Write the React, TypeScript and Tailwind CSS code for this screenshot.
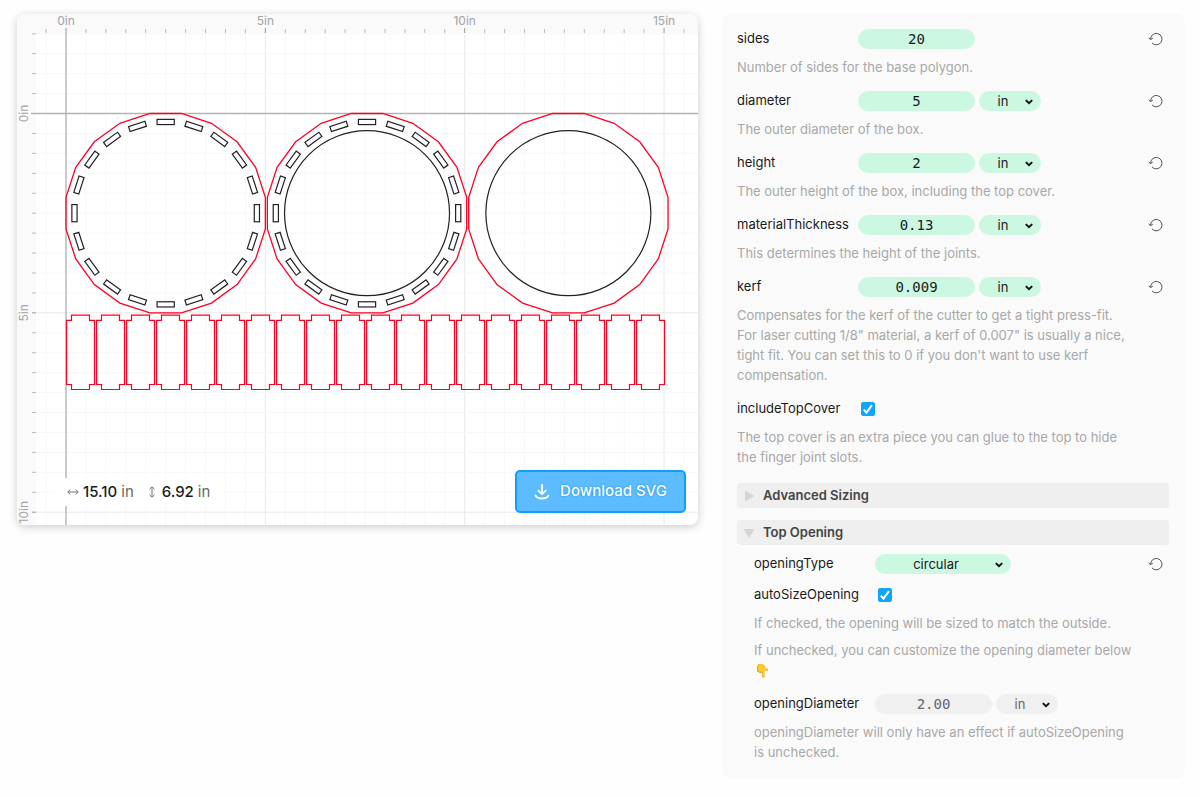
import { useState } from "react";

const PX = 39.87; // pixels per inch
const OX = 49;
const OY = 99.5;
const W = 681;
const H = 511;

const inX = (v: number) => OX + v * PX;
const inY = (v: number) => OY + v * PX;

function Polygon({ cx }: { cx: number }) {
  const r = 2.5 / Math.cos(Math.PI / 20);
  const points = Array.from({ length: 20 }, (_, i) => {
    const a = ((i * 18 + 9) * Math.PI) / 180;
    return `${inX(cx + r * Math.cos(a)).toFixed(2)},${inY(2.5 + r * Math.sin(a)).toFixed(2)}`;
  }).join(" ");
  return <polygon points={points} fill="none" stroke="#ff0022" strokeWidth="1.3" />;
}

function Slots({ cx }: { cx: number }) {
  return (
    <g fill="none" stroke="#222" strokeWidth="1.2">
      {Array.from({ length: 20 }, (_, i) => (
        <rect key={i} x={-8.6} y={-93.8} width={17.2} height={5.2}
          transform={`translate(${inX(cx)} ${inY(2.5)}) rotate(${i * 18})`} />
      ))}
    </g>
  );
}

function Opening({ cx }: { cx: number }) {
  return <circle cx={inX(cx)} cy={inY(2.5)} r={82.5} fill="none" stroke="#222" strokeWidth="1.2" />;
}

function Sides() {
  return (
    <g fill="none" stroke="#ff0022" strokeWidth="1.2">
      {Array.from({ length: 20 }, (_, i) => (
        <path key={i} transform={`translate(${OX + 0.5 + i * 30} 301.2)`}
          d="M5 0H23V5.2H28V69.3H23V74.3H5V69.3H0V5.2H5Z" />
      ))}
    </g>
  );
}

function Drawing() {
  const xs = Array.from({ length: 33 }, (_, i) => i - 1);
  const ys = Array.from({ length: 25 }, (_, i) => i - 4);
  return (
    <svg viewBox={`0 0 ${W} ${H}`} className="block w-full h-auto" role="img" aria-label="Box preview">
      <rect width={W} height="20" fill="#fafafa" />
      <rect width="19" height={H} fill="#fafafa" />

      {/* grid */}
      {xs.map((n) => (
        <g key={n}>
          {n !== 0 && <path d={`M${inX(n / 2)} 20V${H}`} stroke={n % 10 === 0 ? "#e9e9e9" : "#f8f8f8"} />}
          {n !== 0 && <path d={`M${inX(n / 2)} ${n % 10 === 0 ? 14 : 15}V19`} stroke={n % 10 === 0 ? "#999" : "#bbb"} />}
        </g>
      ))}
      {ys.map((n) => (
        <g key={n}>
          {n !== 0 && <path d={`M19 ${inY(n / 2)}H${W}`} stroke={n % 10 === 0 ? "#e9e9e9" : "#f8f8f8"} />}
          {n !== 0 && <path d={`M15 ${inY(n / 2)}H19`} stroke={n % 10 === 0 ? "#999" : "#bbb"} />}
        </g>
      ))}
      <path d={`M${inX(0)} 14V${H}M14 ${inY(0)}H${W}`} stroke="#b4b4b4" strokeWidth="1.4" />

      {/* ruler labels */}
      <g fill="#a3a3a3" fontSize="12" textAnchor="middle">
        {[0, 5, 10, 15].map((n) => (
          <text key={n} x={inX(n)} y="11">{n}in</text>
        ))}
        {[0, 5, 10].map((n) => (
          <text key={n} transform={`translate(11 ${inY(n)}) rotate(-90)`}>{n}in</text>
        ))}
      </g>

      <Polygon cx={2.5} />
      <Slots cx={2.5} />
      <Polygon cx={7.55} />
      <Slots cx={7.55} />
      <Opening cx={7.55} />
      <Polygon cx={12.6} />
      <Opening cx={12.6} />
      <Sides />
    </svg>
  );
}

function ResetButton() {
  return (
    <button type="button" aria-label="Reset" className="ml-auto mr-1.5 text-[#555] cursor-pointer">
      <svg width="15" height="14" viewBox="0 0 15 14" fill="none" stroke="currentColor" strokeWidth="1">
        <path d="M2.6 7.6A5.7 5.7 0 1 1 4 10.9" />
        <path d="M0.6 5.9L2.6 7.6L4.8 6.2" />
      </svg>
    </button>
  );
}

function Chevron() {
  return (
    <svg width="8" height="6" viewBox="0 0 8 6" fill="none" stroke="#111" strokeWidth="2"
      className="absolute right-2 top-2 pointer-events-none">
      <path d="M0.8 1.1L4 4.2L7.2 1.1" />
    </svg>
  );
}

function Label({ name }: { name: string }) {
  return <label htmlFor={name} className="w-[121px] shrink-0 text-[#1a1a1a]">{name}</label>;
}

function Unit({ name, disabled }: { name: string; disabled?: boolean }) {
  return (
    <div className="relative ml-1">
      <select aria-label={`${name} unit`} disabled={disabled} defaultValue="in"
        className={`block appearance-none w-[62px] h-5 pr-3.5 rounded-full text-center leading-5 ${disabled ? "bg-[#f0f0f0] text-[#666] opacity-100" : "bg-[#ccf8e2] text-[#1a1a1a]"}`}>
        <option>in</option>
        <option>mm</option>
        <option>cm</option>
      </select>
      <Chevron />
    </div>
  );
}

function NumberRow({ name, value, unit = true, disabled }: { name: string; value: string; unit?: boolean; disabled?: boolean }) {
  const [current, setCurrent] = useState(value);
  return (
    <div className="flex items-center h-5">
      <Label name={name} />
      <input id={name} type="text" inputMode="decimal" value={current} disabled={disabled}
        onChange={(e) => setCurrent(e.target.value)}
        className={`w-[117px] h-5 rounded-full text-center text-sm font-['DejaVu_Sans_Mono',monospace] ${disabled ? "bg-[#f0f0f0] text-[#666]" : "bg-[#ccf8e2] text-[#1a1a1a]"}`} />
      {unit && <Unit name={name} disabled={disabled} />}
      {!disabled && <ResetButton />}
    </div>
  );
}

function CheckRow({ name }: { name: string }) {
  return (
    <div className="flex items-center h-5">
      <Label name={name} />
      <span className="relative ml-[3px]">
        <input id={name} type="checkbox" defaultChecked
          className="peer block appearance-none size-3.5 rounded-xs border border-[#999] checked:border-[#10a5fb] checked:bg-[#10a5fb]" />
        <svg viewBox="0 0 14 14" fill="none" stroke="#fff" strokeWidth="2"
          className="absolute inset-0 size-3.5 pointer-events-none invisible peer-checked:visible">
          <path d="M2.8 7.6L5.5 10.6L11 3" />
        </svg>
      </span>
    </div>
  );
}

function Description({ children }: { children: React.ReactNode }) {
  return <p className="mt-2 mb-3.5 pr-[33px] leading-5 text-[#a8a8a8]">{children}</p>;
}

function App() {
  return (
    <main className="flex items-start gap-6 pt-3.5 pl-[17px] pr-[15px] pb-4 min-h-screen bg-[#fefefe] font-[Inter,sans-serif] text-[13px]">

      {/* PREVIEW */}
      <section className="relative flex-1 min-w-0 overflow-hidden rounded-lg bg-white shadow-[0_2px_9px_rgba(0,0,0,0.2)]">
        <Drawing />

        <div className="absolute left-9 bottom-[19px] flex items-center h-7 pl-3.5 pr-3 bg-white text-[15px] text-[#666]">
          <svg width="12" height="8" viewBox="0 0 12 8" fill="none" stroke="#777">
            <path d="M0.8 4H11.2M3.2 1.5L0.8 4L3.2 6.5M8.8 1.5L11.2 4L8.8 6.5" />
          </svg>
          <span className="ml-1 mr-1 font-medium text-[#1a1a1a]">15.10</span> in
          <svg width="8" height="12" viewBox="0 0 8 12" fill="none" stroke="#777" className="ml-3.5">
            <path d="M4 0.8V11.2M1.5 3.2L4 0.8L6.5 3.2M1.5 8.8L4 11.2L6.5 8.8" />
          </svg>
          <span className="ml-1.5 mr-1 font-medium text-[#1a1a1a]">6.92</span> in
        </div>

        <button type="button"
          className="absolute right-3 bottom-3 flex items-center justify-center gap-2.5 w-[171px] h-[43px] rounded-[5px] border-2 border-[#0f9ff5] bg-[#5cbcff] text-[15px] font-medium text-white text-shadow-[0_0_2px_#0b8ee0] cursor-pointer">
          <svg width="16" height="16" viewBox="0 0 16 16" fill="none" stroke="#fff" strokeWidth="1.8" strokeLinecap="round" strokeLinejoin="round">
            <path d="M8 1V10M4.3 6.6L8 10.2L11.7 6.6" />
            <path d="M1.5 11.5C3.5 15.5 12.5 15.5 14.5 11.5" />
          </svg>
          Download SVG
        </button>
      </section>

      {/* SETTINGS */}
      <form className="w-[463px] shrink-0 rounded-lg bg-[#fafafa] pt-[15px] pl-[15px] pr-4 pb-[2px]">
        <NumberRow name="sides" value="20" unit={false} />
        <Description>Number of sides for the base polygon.</Description>
        <NumberRow name="diameter" value="5" />
        <Description>The outer diameter of the box.</Description>
        <NumberRow name="height" value="2" />
        <Description>The outer height of the box, including the top cover.</Description>
        <NumberRow name="materialThickness" value="0.13" />
        <Description>This determines the height of the joints.</Description>
        <NumberRow name="kerf" value="0.009" />
        <Description>
          Compensates for the kerf of the cutter to get a tight press-fit. For laser cutting 1/8" material, a kerf of
          0.007" is usually a nice, tight fit. You can set this to 0 if you don't want to use kerf compensation.
        </Description>
        <CheckRow name="includeTopCover" />
        <Description>The top cover is an extra piece you can glue to the top to hide the finger joint slots.</Description>

        <details className="group mt-4">
          <summary className="flex items-center h-[25px] pl-1.5 rounded-sm bg-[#efefef] font-semibold text-[#444] cursor-pointer">
            <svg width="12" height="12" viewBox="0 0 12 12" fill="#d4d4d4" className="mr-2 group-open:rotate-90">
              <path d="M2 0.5L11 6L2 11.5Z" />
            </svg>
            Advanced Sizing
          </summary>
        </details>

        <details open className="group mt-3">
          <summary className="flex items-center h-[25px] pl-1.5 rounded-sm bg-[#efefef] font-semibold text-[#444] cursor-pointer">
            <svg width="12" height="12" viewBox="0 0 12 12" fill="#d4d4d4" className="mr-2 group-open:rotate-90">
              <path d="M2 0.5L11 6L2 11.5Z" />
            </svg>
            Top Opening
          </summary>

          <div className="pt-[9px] pl-[17px]">
            <div className="flex items-center h-5 mb-[11px]">
              <Label name="openingType" />
              <div className="relative">
                <select id="openingType" defaultValue="circular"
                  className="block appearance-none w-[136px] h-5 pr-3.5 rounded-full bg-[#ccf8e2] text-center leading-5 text-[#1a1a1a]">
                  <option>circular</option>
                  <option>polygon</option>
                </select>
                <Chevron />
              </div>
              <ResetButton />
            </div>
            <CheckRow name="autoSizeOpening" />
            <p className="mt-2 leading-5 text-[#a8a8a8]">If checked, the opening will be sized to match the outside.</p>
            <p className="mt-[7px] mb-3.5 pr-[33px] leading-5 text-[#a8a8a8]">
              If unchecked, you can customize the opening diameter below 👇
            </p>
            <NumberRow name="openingDiameter" value="2.00" disabled />
            <Description>openingDiameter will only have an effect if autoSizeOpening is unchecked.</Description>
          </div>
        </details>
      </form>
    </main>
  );
}

export default App;
